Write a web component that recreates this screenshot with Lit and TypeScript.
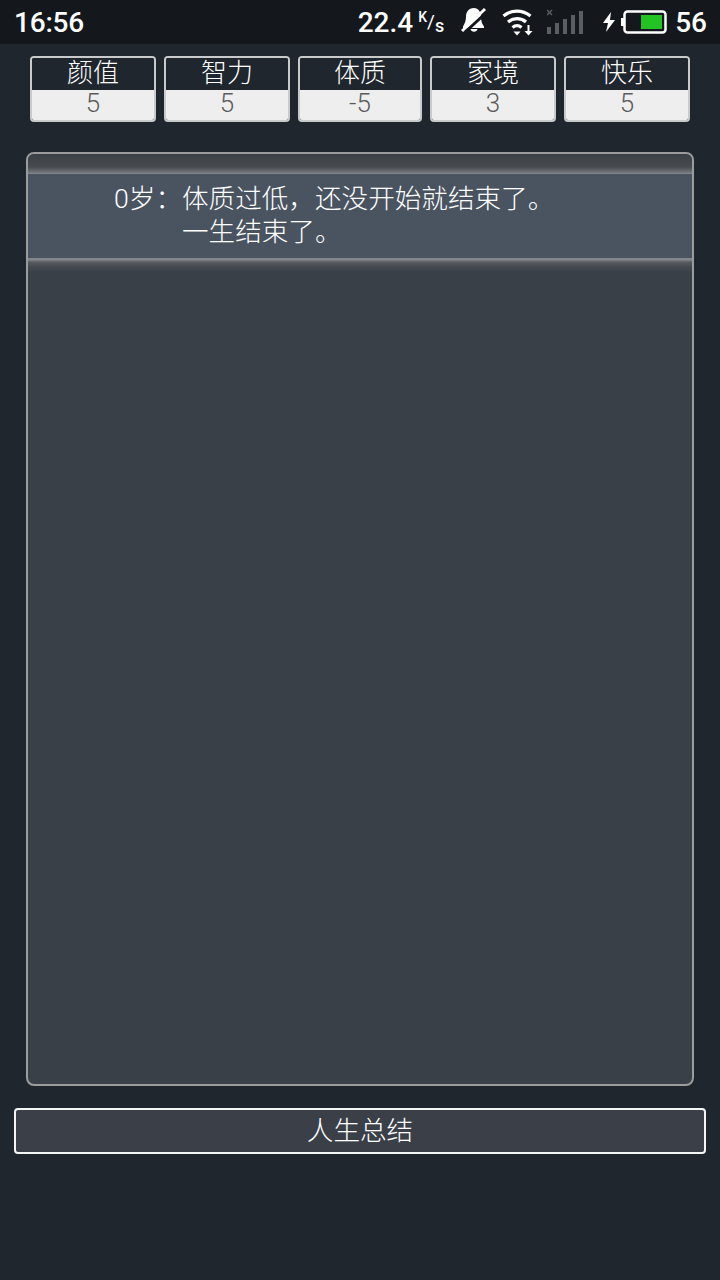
import { LitElement, html, css } from "lit";
import { customElement } from "lit/decorators.js";

const stats: [string, string][] = [["颜值", "5"], ["智力", "5"], ["体质", "-5"], ["家境", "3"], ["快乐", "5"]];

@customElement("app-root")
export class AppRoot extends LitElement {
  static styles = css`
    :host { display: block; width: 720px; height: 1280px; background: #20262e; color: #fff; font-family: Roboto, "Noto Sans CJK SC", sans-serif; overflow: hidden; }
    .status { height: 44px; background: #14181d; display: flex; align-items: center; padding: 0 13px 0 14px; color: #fff; font-weight: 500; box-sizing: border-box; }
    .time { font-size: 28px; letter-spacing: -0.2px; flex: 1; }
    .speed { font-size: 28px; }
    .unit { display: flex; align-items: flex-start; margin-left: 5px; width: 26px; height: 24px; font-weight: 500; line-height: 1; }
    .unit .a { font-size: 14px; margin-top: 0; }
    .unit .b { font-size: 19px; font-weight: 400; margin-top: 2px; }
    .unit .c { font-size: 18px; margin-top: 7px; }
    .icons { display: flex; align-items: center; }
    .batt-num { font-size: 28px; margin-left: 8px; }
    svg { display: block; }
    .bell { margin: -4px 0 0 17px; }
    .wifi { margin: 0 0 0 15px; }
    .signal { margin-left: 13px; }
    .bolt { margin-left: 19px; }
    .batt { margin-left: 5px; }
    .stats { display: grid; grid-template-columns: 126px 126px 124px 126px 126px; gap: 8px; padding: 12px 30px 0; }
    .stat { height: 66px; box-sizing: border-box; border: 2px solid #c8cacc; border-radius: 4px; overflow: hidden; display: flex; flex-direction: column; text-align: center; font-size: 26px; }
    .stat .k { height: 32px; line-height: 30px; background: #20262e; color: #fff; font-weight: 300; }
    .stat .v { flex: 1; background: #eeeeee; color: #5c5c5c; line-height: 26px; font-weight: 300; }
    .panel { margin: 30px 26px 0; height: 934px; box-sizing: border-box; border: 2px solid #9a9c9e; border-radius: 8px; background: #3a4048; overflow: hidden; }
    .pad { height: 20px; background: linear-gradient(#3b4046 0, #474b4f 13px, #65686c 17px, #85888c 20px); }
    .row { display: grid; grid-template-columns: 154px 1fr; font-size: 26.6px; line-height: 33px; padding-top: 8px; background: #4a5461; color: #fff; height: 84px; box-sizing: border-box; font-weight: 300; }
    .age { text-align: right; }
    .glow { height: 14px; background: linear-gradient(#85888c 0, #80848a 2px, #5a5e63 4px, #474c52 8px, #3a4048 14px); }
    .btn { margin: 22px 14px 0; height: 46px; box-sizing: border-box; border: 2px solid #f4f5f6; border-radius: 4px; background: #3b3f48; color: #fff; font-size: 26.6px; line-height: 42px; text-align: center; font-weight: 300; }
  `;

  render() {
    return html`
      <div class="status">
        <span class="time">16:56</span>
        <span class="speed">22.4</span>
        <span class="unit"><span class="a">K</span><span class="b">/</span><span class="c">s</span></span>
        <span class="icons">
          <svg class="bell" width="26" height="28" viewBox="0 0 26 28" fill="#fff">
            <path d="M13 2c-5.500 0-8 4-8 9 0 4-1.500 7-3 9.500V22h21v-1.500c-2-2.500-3-5.500-3-9.500 0-5-2.500-9-7-9z"/>
            <path d="M9.500 23h7c-.5 3.500-6.500 3.500-7 0z"/>
            <path d="M3 27 26 6" stroke="#14181d" stroke-width="3"/>
            <path d="M1 25 24 3" stroke="#fff" stroke-width="3"/>
          </svg>
          <svg class="wifi" width="32" height="28" viewBox="0 0 32 28" fill="none" stroke="#fff" stroke-width="3.200">
            <path d="M1.500 8c7.500-6.500 19-6.500 27 0M6 14c5-4.400 13-4.400 18 0M10.500 19.500c2.800-2.400 6.200-2.400 9 0"/>
            <path d="M11.500 23.500h7L15 27.500z" fill="#fff" stroke="none"/>
            <path d="M26.500 17v7" stroke-width="2"/><path d="M22.500 23h8L26.500 27.500z" fill="#fff" stroke="none"/>
          </svg>
          <svg class="signal" width="36" height="26" viewBox="0 0 36 26" fill="#5b5f64">
            <rect x="0" y="18" width="4" height="7"/><rect x="8" y="14" width="4" height="11"/><rect x="16" y="10" width="4" height="15"/><rect x="24" y="6" width="4" height="19"/><rect x="32" y="2" width="4" height="23"/>
            <path d="M0 1l5 5M5 1 0 6" stroke="#5b5f64" stroke-width="1.500"/>
          </svg>
          <svg class="bolt" width="14" height="20" viewBox="0 0 14 20" fill="#fff"><path d="M9 0 1 11h5l-2 9 9-12H8z"/></svg>
          <svg class="batt" width="46" height="24" viewBox="0 0 46 24"><rect x="0" y="8" width="3" height="8" fill="#fff"/><rect x="3.500" y="1.500" width="41" height="21" rx="3" fill="#14181d" stroke="#fff" stroke-width="2.500"/><rect x="20" y="5" width="21" height="14" fill="#22c322"/></svg>
        </span>
        <span class="batt-num">56</span>
      </div>
      <div class="stats">
        ${stats.map(([k, v]) => html`<div class="stat"><div class="k">${k}</div><div class="v">${v}</div></div>`)}
      </div>
      <div class="panel">
        <div class="pad"></div>
        <div class="row">
          <div class="age">0岁：</div>
          <div>体质过低，还没开始就结束了。<br />一生结束了。</div>
        </div>
        <div class="glow"></div>
      </div>
      <div class="btn">人生总结</div>
    `;
  }
}
